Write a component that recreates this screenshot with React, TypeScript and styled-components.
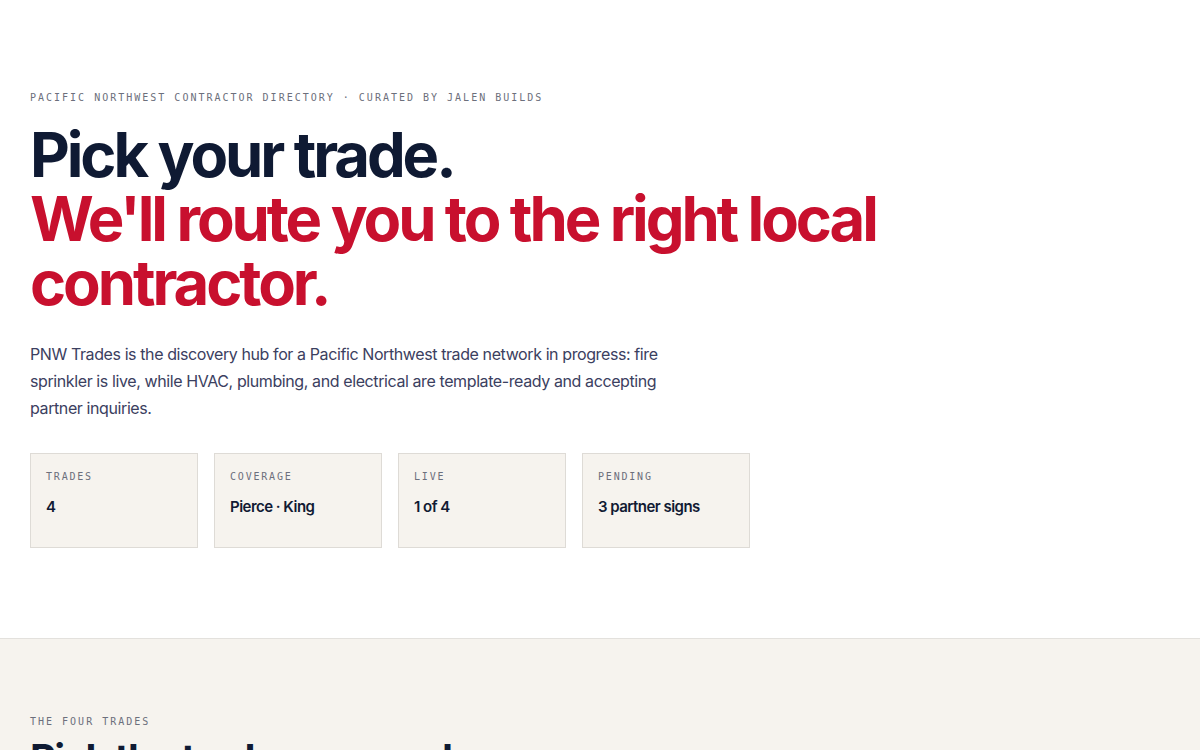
import React from "react";
import styled, { createGlobalStyle } from "styled-components";

const GlobalStyle = createGlobalStyle`
  * { box-sizing: border-box; }
  html, body { margin: 0; padding: 0; background: #ffffff; }
  body {
    font-family: Inter, "Noto Sans", sans-serif;
    color: #0f1b35;
    -webkit-font-smoothing: antialiased;
  }
`;

const Page = styled.main`
  display: flex;
  flex-direction: column;
`;

const Hero = styled.section`
  padding: 91px 30px 90px;
  display: flex;
  flex-direction: column;
`;

const Eyebrow = styled.p`
  margin: 0;
  font-family: "DejaVu Sans Mono", "Liberation Mono", monospace;
  font-size: 10px;
  letter-spacing: 0.2em;
  text-transform: uppercase;
  color: #6c6f7c;
  line-height: 14px;
`;

const Title = styled.h1`
  margin: 18px 0 0;
  font-family: Inter, sans-serif;
  font-weight: 700;
  font-size: 61.5px;
  line-height: 64px;
  letter-spacing: -0.05em;
  color: #0f1a33;
  max-width: 880px;
`;

const Accent = styled.span`
  display: block;
  color: #c8102e;
`;

const Lead = styled.p`
  margin: 26px 0 0;
  max-width: 660px;
  font-size: 16px;
  line-height: 27px;
  color: #3b4060;
  letter-spacing: -0.025em;
`;

const Stats = styled.div`
  margin-top: 31px;
  display: grid;
  grid-template-columns: repeat(4, 168px);
  gap: 16px;
`;

const StatCard = styled.div`
  height: 95px;
  background: #f6f3ee;
  border: 1px solid #dedbd6;
  padding: 17px 15px;
  display: flex;
  flex-direction: column;
  gap: 14px;
`;

const StatLabel = styled.span`
  font-family: "DejaVu Sans Mono", "Liberation Mono", monospace;
  font-size: 10px;
  letter-spacing: 0.18em;
  text-transform: uppercase;
  color: #6c6f7c;
  line-height: 12px;
`;

const StatValue = styled.span`
  font-size: 15px;
  font-weight: 600;
  letter-spacing: -0.035em;
  color: #111a33;
  line-height: 20px;
`;

const Trades = styled.section`
  background: #f6f3ee;
  border-top: 1px solid #e3e1dd;
  padding: 76px 30px 80px;
  display: flex;
  flex-direction: column;
`;

const SectionTitle = styled.h2`
  margin: 8px 0 0;
  font-size: 40px;
  font-weight: 700;
  letter-spacing: -0.04em;
  line-height: 44px;
  color: #0f1a33;
`;

const stats = [
  { label: "Trades", value: "4" },
  { label: "Coverage", value: "Pierce · King" },
  { label: "Live", value: "1 of 4" },
  { label: "Pending", value: "3 partner signs" },
];

export default function App() {
  return (
    <Page>
      <GlobalStyle />
      <Hero>
        <Eyebrow>Pacific Northwest Contractor Directory · Curated by Jalen Builds</Eyebrow>
        <Title>
          Pick your trade.
          <Accent>We'll route you to the right local contractor.</Accent>
        </Title>
        <Lead>
          PNW Trades is the discovery hub for a Pacific Northwest trade network in progress: fire
          sprinkler is live, while HVAC, plumbing, and electrical are template-ready and accepting
          partner inquiries.
        </Lead>
        <Stats>
          {stats.map((s) => (
            <StatCard key={s.label}>
              <StatLabel>{s.label}</StatLabel>
              <StatValue>{s.value}</StatValue>
            </StatCard>
          ))}
        </Stats>
      </Hero>
      <Trades>
        <Eyebrow>The four trades</Eyebrow>
        <SectionTitle>Pick the trade you need.</SectionTitle>
      </Trades>
    </Page>
  );
}
